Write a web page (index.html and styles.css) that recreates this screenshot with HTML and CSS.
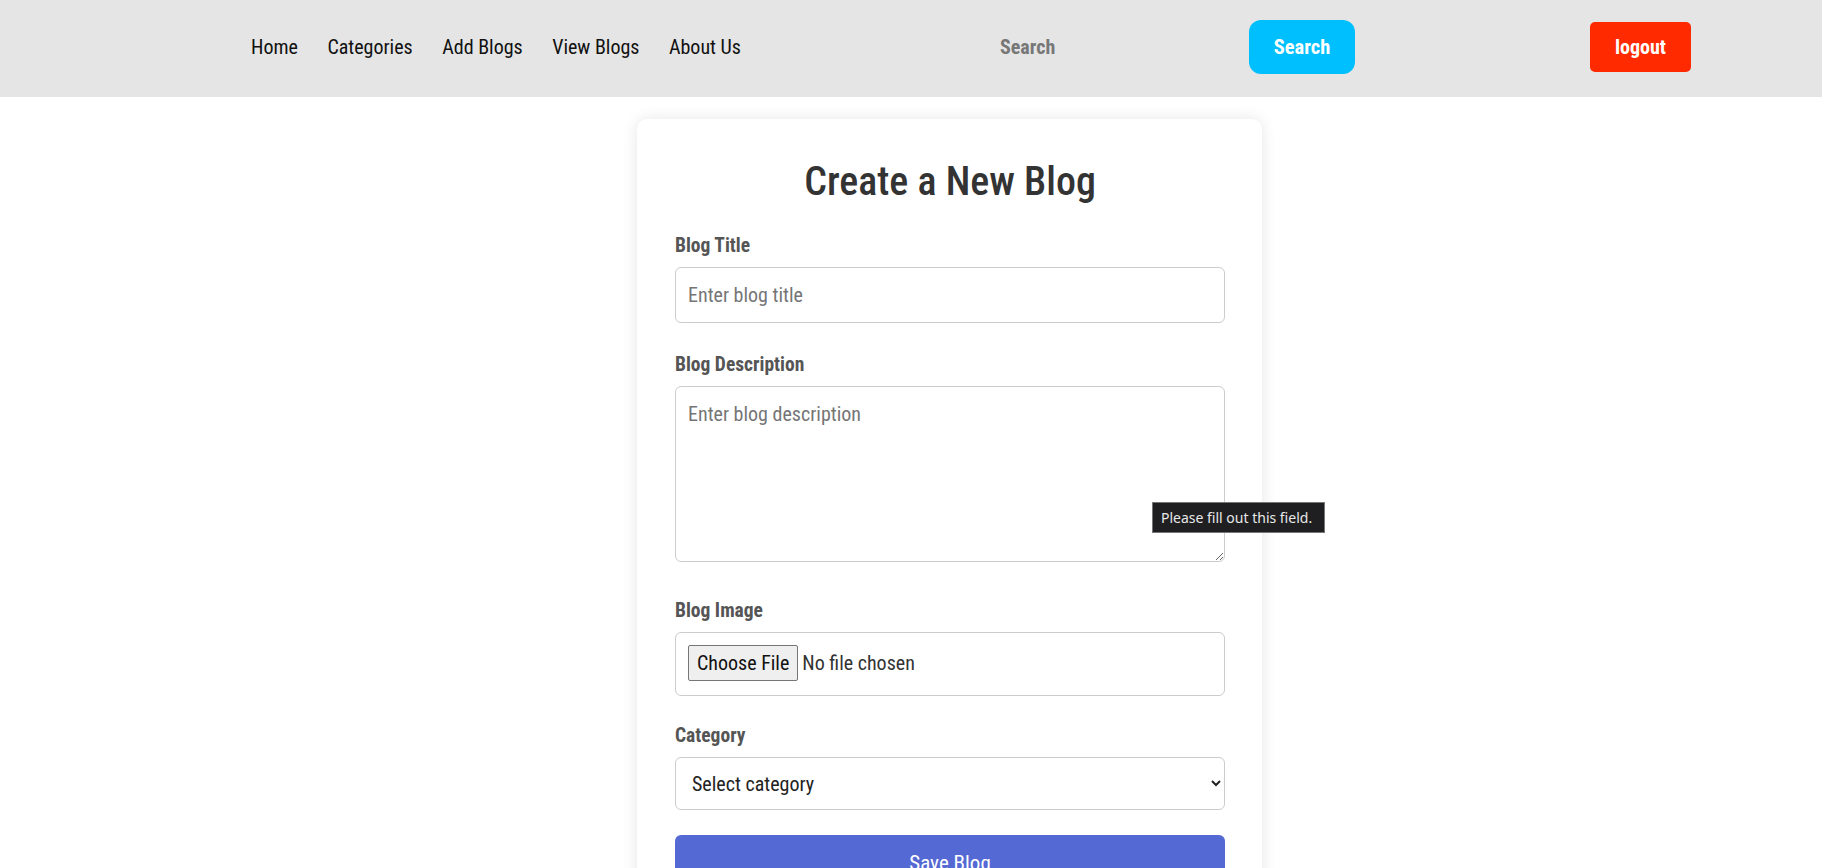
FILE: index.html
```html
<!DOCTYPE html>
<html lang="en">
<head>
<meta charset="utf-8">
<title>Create a New Blog</title>
<link rel="stylesheet" href="styles.css">
</head>
<body>
<header class="topbar">
  <nav class="nav">
    <a class="nav-link" href="#">Home</a>
    <a class="nav-link" href="#">Categories</a>
    <a class="nav-link" href="#">Add Blogs</a>
    <a class="nav-link" href="#">View Blogs</a>
    <a class="nav-link" href="#">About Us</a>
  </nav>
  <form class="search">
    <input class="search-input" type="text" placeholder="Search">
    <button class="search-btn" type="button">Search</button>
  </form>
  <button class="logout-btn" type="button">logout</button>
</header>

<main class="card">
  <h2 class="card-title">Create a New Blog</h2>
  <div class="group">
    <label class="label">Blog Title</label>
    <input class="field" type="text" placeholder="Enter blog title">
  </div>
  <div class="group group-desc">
    <label class="label">Blog Description</label>
    <div class="area-wrap">
      <textarea class="field area" placeholder="Enter blog description"></textarea>
      <div class="tooltip">Please fill out this field.</div>
    </div>
  </div>
  <div class="group group-file">
    <label class="label">Blog Image</label>
    <input class="field file" type="file">
  </div>
  <div class="group group-select">
    <label class="label">Category</label>
    <select class="field select">
      <option>Select category</option>
    </select>
  </div>
  <button class="save-btn" type="button">Save Blog</button>
</main>
</body>
</html>
```
FILE: styles.css
```css
* { box-sizing: border-box; }
body {
  margin: 0;
  background: #fff;
  font-family: "Roboto Condensed", "Liberation Sans Narrow", "Roboto", sans-serif;
  color: #333;
}
.topbar {
  height: 97px;
  background: #e5e5e5;
  display: flex;
  align-items: center;
  padding: 0 0 3px 251px;
}
.nav {
  width: 739px;
  display: flex;
  gap: 29.5px;
}
.nav-link {
  color: #111;
  text-decoration: none;
  font-size: 20px;
}
.search {
  display: flex;
  align-items: center;
}
.search-input {
  width: 259px;
  border: none;
  background: transparent;
  padding: 0 10px;
  font-family: inherit;
  font-size: 20px;
  font-weight: 700;
  outline: none;
}
.search-input::placeholder { color: #777; }
.search-btn {
  width: 106px;
  height: 54px;
  border: none;
  border-radius: 12px;
  background: #00bfff;
  color: #fff;
  font-family: inherit;
  font-size: 20.5px;
  font-weight: 700;
}
.logout-btn {
  margin-left: 235px;
  width: 101px;
  height: 50px;
  border: none;
  border-radius: 5px;
  background: #ff2a00;
  color: #fff;
  font-family: inherit;
  font-size: 20px;
  font-weight: 700;
}
.card {
  width: 625px;
  margin: 22px 0 0 637px;
  padding: 40px 37px 38px 38px;
  background: #fff;
  border-radius: 10px;
  box-shadow: 0 0 15px rgba(0,0,0,0.1);
}
.card-title {
  margin: 0 0 29px;
  text-align: center;
  font-size: 40px;
  line-height: 46px;
  font-weight: 500;
  color: #333;
}
.group { margin-bottom: 30px; }
.group-desc { margin-bottom: 37px; }
.group-file { margin-bottom: 28px; }
.group-select { margin-bottom: 25px; }
.label {
  display: block;
  font-size: 19.5px;
  line-height: 22px;
  font-weight: 700;
  color: #555;
  padding-top: 1px;
  margin-bottom: 10px;
}
.field {
  display: block;
  width: 100%;
  height: 56px;
  border: 1px solid #ccc;
  border-radius: 6px;
  padding: 0 12px;
  font-family: inherit;
  font-size: 20px;
  color: #333;
  background: #fff;
}
.field::placeholder { color: #757575; }
.area-wrap { position: relative; }
.area {
  height: 176px;
  padding: 15px 12px;
  resize: vertical;
}
.tooltip {
  position: absolute;
  left: 477px;
  top: 116px;
  width: 173px;
  height: 31px;
  background: #1f1f22;
  border: 1px solid #767676;
  color: #e8e8e8;
  font-family: "Noto Sans", "Open Sans", sans-serif;
  font-size: 14px;
  line-height: 29px;
  padding-left: 8px;
  white-space: nowrap;
}
.file {
  height: 64px;
  padding: 12px;
}
.file::file-selector-button {
  font-family: inherit;
  font-size: 20px;
  height: 36px;
  padding: 0 8px;
  margin-right: 4px;
  border: 1px solid #767676;
  border-radius: 2px;
  background: #efefef;
  color: #111;
}
.select {
  height: 53px;
  padding: 0 12px;
  color: #222;
}
.save-btn {
  display: block;
  width: 100%;
  height: 56px;
  border: none;
  border-radius: 6px;
  background: #5469d4;
  color: #fff;
  font-family: inherit;
  font-size: 21px;
}
```
